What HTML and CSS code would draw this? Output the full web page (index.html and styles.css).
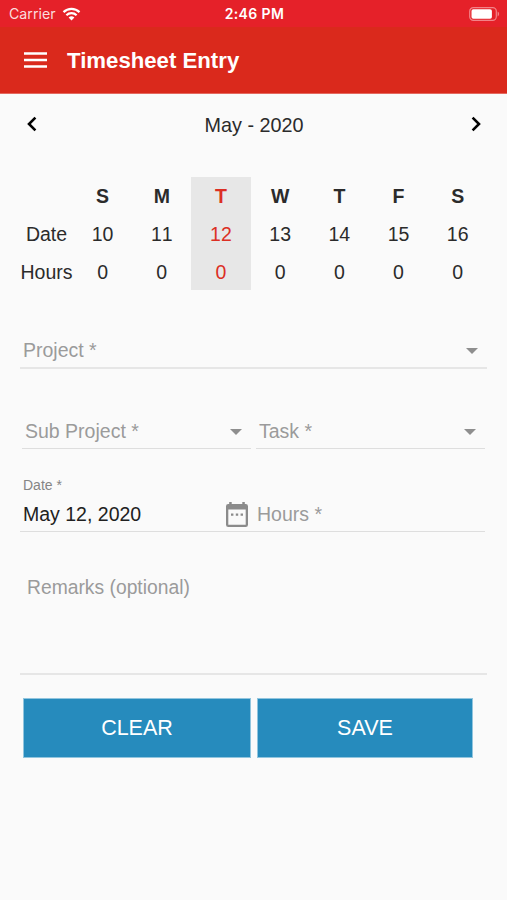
FILE: index.html
```html
<!DOCTYPE html>
<html lang="en">
<head>
    <meta charset="UTF-8">
    <meta name="viewport" content="width=device-width, initial-scale=1.0">
    <title>Timesheet Entry</title>
    <link rel="stylesheet" href="styles.css">
</head>
<body>
    <!-- Status bar -->
    <div class="status-bar">
        <div class="carrier">
            <span>Carrier</span>
            <svg class="wifi" width="19" height="14" viewBox="0 0 18 14">
                <path d="M1 5.100a11.500 11.500 0 0 1 16 0M3.900 8.200a7.300 7.300 0 0 1 10.200 0" fill="none" stroke="#fff" stroke-width="2.2"/>
                <path d="M9 13.600 6.100 10.600a4.200 4.200 0 0 1 5.800 0z" fill="#fff"/>
            </svg>
        </div>
        <div class="time">2:46 PM</div>
        <svg class="battery" width="31" height="14" viewBox="0 0 31 14">
            <rect x="0.7" y="0.7" width="26.6" height="12.6" rx="3.6" fill="none" stroke="#f28388" stroke-width="1.2"/>
            <rect x="2.5" y="2.2" width="20.4" height="9.6" rx="1.8" fill="#fff"/>
            <path d="M28.600 4.600c2 .8 2 4 0 4.800z" fill="#f28388"/>
        </svg>
    </div>

    <header class="header">
        <svg class="menu" width="23" height="16" viewBox="0 0 23 16">
            <path d="M0 1.500h23M0 8h23M0 14.500h23" stroke="#fff" stroke-width="2.5"/>
        </svg>
        <h1>Timesheet Entry</h1>
    </header>

    <main class="content">
        <!-- Month navigation -->
        <div class="month">
            <svg width="10" height="16" viewBox="0 0 10 16"><path d="M8.400 1.600 2 8l6.400 6.400" fill="none" stroke="#000" stroke-width="2.6"/></svg>
            <span>May - 2020</span>
            <svg width="10" height="16" viewBox="0 0 10 16"><path d="M1.600 1.600 8 8l-6.400 6.400" fill="none" stroke="#000" stroke-width="2.6"/></svg>
        </div>

        <!-- Week -->
        <div class="week">
            <div class="day labels"><b></b><span>Date</span><span>Hours</span></div>
            <div class="day"><b>S</b><span>10</span><span>0</span></div>
            <div class="day"><b>M</b><span>11</span><span>0</span></div>
            <div class="day active"><b>T</b><span>12</span><span>0</span></div>
            <div class="day"><b>W</b><span>13</span><span>0</span></div>
            <div class="day"><b>T</b><span>14</span><span>0</span></div>
            <div class="day"><b>F</b><span>15</span><span>0</span></div>
            <div class="day"><b>S</b><span>16</span><span>0</span></div>
        </div>

        <!-- Entry form -->
        <div class="field project">
            <span>Project *</span>
            <i class="arrow"></i>
        </div>
        <div class="row selects">
            <div class="field sub-project">
                <span>Sub Project *</span>
                <i class="arrow"></i>
            </div>
            <div class="field task">
                <span>Task *</span>
                <i class="arrow"></i>
            </div>
        </div>
        <div class="date-label">Date *</div>
        <div class="row date-row">
            <div class="field date">
                <span>May 12, 2020</span>
                <svg width="22" height="25" viewBox="0 0 22 25">
                    <path fill="#8b8b8b" fill-rule="evenodd" d="M3.200 0h2.500v2h10.600V0h2.500v2h.9A2.300 2.300 0 0 1 22 4.300v18.400a2.300 2.300 0 0 1-2.300 2.300H2.300A2.300 2.300 0 0 1 0 22.700V4.300A2.300 2.300 0 0 1 2.300 2h.9zM2.300 7.600v15.100h17.400V7.600z"/>
                    <path fill="#8b8b8b" d="M5 11.400h2.400v2.400H5zM9.800 11.400h2.400v2.400H9.800zM14.600 11.400h2.400v2.400h-2.400z"/>
                </svg>
            </div>
            <div class="field hours"><span>Hours *</span></div>
        </div>
        <div class="field remarks"><span>Remarks (optional)</span></div>

        <div class="buttons">
            <button class="clear">CLEAR</button>
            <button class="save">SAVE</button>
        </div>
    </main>
</body>
</html>
```
FILE: styles.css
```css
* {
    margin: 0;
    padding: 0;
    box-sizing: border-box;
}

body {
    height: 900px;
    background: #fafafa;
    color: #2b2b2b;
    font-family: "Liberation Sans", Arial, sans-serif;
    font-size: 19.5px;
}

svg {
    display: block;
}

.status-bar {
    display: grid;
    grid-template-columns: 1fr auto 1fr;
    align-items: center;
    height: 27px;
    padding: 0 7px 0 9px;
    background: #e52129;
    color: #fff;
    font-family: Inter, sans-serif;
}

.carrier {
    display: flex;
    align-items: center;
    gap: 6px;
    font-size: 14.2px;
    color: #fbdcdd;
}

.time {
    font-size: 14px;
    font-weight: 600;
    letter-spacing: 0.4px;
}

.battery {
    justify-self: end;
}

.header {
    display: flex;
    align-items: center;
    gap: 20px;
    height: 67px;
    padding: 0 24px;
    background: #da291c;
    border-bottom: 1px solid #e4695f;
    color: #fff;
}

.header h1 {
    padding-top: 1px;
    font-size: 22.2px;
    font-weight: bold;
}

.content {
    padding: 0 20px;
}

.month {
    display: flex;
    justify-content: space-between;
    align-items: center;
    height: 62px;
    padding: 0 6px 0 7px;
    font-size: 19.8px;
}

.month svg {
    margin-bottom: 2px;
}

.week {
    display: grid;
    grid-template-columns: 53px repeat(7, 59.2px);
    margin-top: 21px;
}

.day {
    display: grid;
    grid-template-rows: repeat(3, 38px);
    height: 113px;
    line-height: 38px;
    text-align: center;
    font-kerning: none;
}

.active {
    background: #e7e7e7;
    color: #dc2f24;
}

.field {
    display: flex;
    align-items: center;
    justify-content: space-between;
    border-bottom: 1px solid #dedede;
    color: #9b9b9b;
}

.arrow {
    border: 6.5px solid transparent;
    border-top-color: #8e8e8e;
    border-bottom: none;
}

.row {
    display: flex;
}

.project {
    height: 36px;
    margin-top: 43px;
    padding: 1px 9px 0 3px;
    border-bottom: 2px solid #e6e6e6;
}

.selects {
    gap: 5px;
    margin: 44px 2px 0;
}

.selects .field {
    flex: 1;
    height: 36px;
    padding: 2px 9px 0 3px;
}

.date-label {
    margin: 27px 0 0 3px;
    color: #858585;
    font-size: 14px;
    line-height: 18px;
}

.date-row {
    margin-right: 2px;
}

.date-row .field {
    height: 38px;
    padding-top: 4px;
}

.date {
    width: 228px;
    padding-left: 3px;
    color: #212121;
}

.hours {
    flex: 1;
    padding-left: 9px;
}

.remarks {
    align-items: flex-start;
    height: 99px;
    margin-top: 44px;
    padding: 1px 0 0 7px;
    border-bottom: 2px solid #e6e6e6;
    font-size: 19.3px;
}

.buttons {
    display: flex;
    gap: 6px;
    margin: 23px 0 0 3px;
}

.buttons button {
    height: 60px;
    padding-top: 1px;
    background: #268bbd;
    border: 1px solid #91c5de;
    color: #fff;
    font-family: inherit;
    font-size: 21.5px;
}

.clear {
    width: 228px;
}

.save {
    width: 216px;
}
```
